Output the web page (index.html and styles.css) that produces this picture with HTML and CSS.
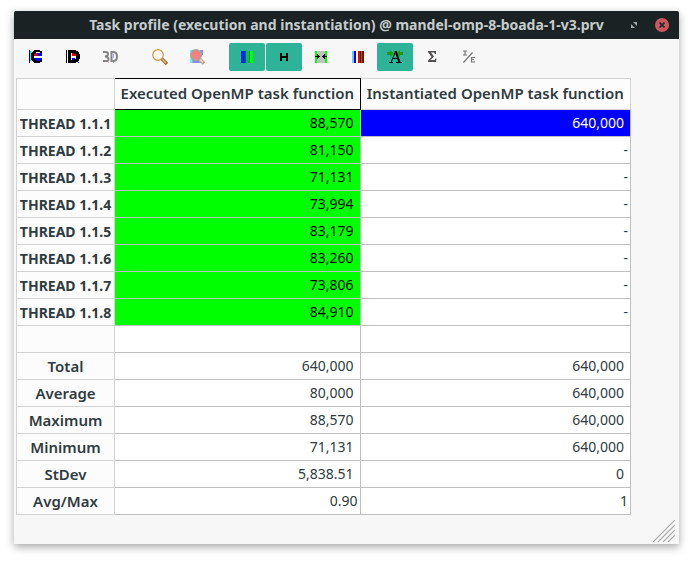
FILE: index.html
```html
<!DOCTYPE html>
<html lang="en">
<head>
<meta charset="utf-8">
<title>Task profile</title>
<link rel="stylesheet" href="styles.css">
</head>
<body>
<main class="window">
  <header class="titlebar">
    <h1 class="title">Task profile (execution and instantiation) @ mandel-omp-8-boada-1-v3.prv</h1>
    <div class="controls">
      <button class="control" aria-label="Restore"><svg width="6" height="6" viewBox="0 0 6 6"><path d="M2 0H6V4ZM0 2L4 6H0Z" fill="#a4aaaa"/></svg></button>
      <button class="control close" aria-label="Close"><svg width="6" height="6" viewBox="0 0 6 6"><path d="M.5 .5L5.500 5.500M5.500 .5L.5 5.500" stroke="#222b2e" stroke-width="1.700"/></svg></button>
    </div>
  </header>
  <div class="toolbar" role="toolbar" aria-label="Histogram tools">
    <div class="group">
      <button class="tool" aria-label="Open control window"><svg class="pixel" width="16" height="16" viewBox="0 0 16 16"><path d="M2 2H4V12H2Z" fill="#0ff"/><path d="M6 4H9V7H6Z" fill="#f00"/><path d="M9 4H14V7H9ZM6 9H14V12H6Z" fill="#00f"/><path d="M6 7H14V9H6Z" fill="#fff"/><path d="M1 1H2V14H1Z"/><path d="M6 1H12V2H14V4H12V3H8V4H7V5H6V10H7V11H8V12H12V11H14V13H12V14H6V13H5V12H4V11H3V4H4V3H5V2H6Z"/></svg></button>
      <button class="tool" aria-label="Open data window"><svg class="pixel" width="16" height="16" viewBox="0 0 16 16"><path d="M6 4H11V11H6Z" fill="#fff"/><path d="M7 4H11V7H7Z" fill="#f00"/><path d="M7 9H10V11H7ZM13 13H14V14H13Z" fill="#00f"/><path d="M1 1H2V14H1Z"/><path fill-rule="evenodd" d="M3 1H11V2H13V3H14V5H15V10H14V12H13V13H11V14H3ZM6 4V11H9V10H11V5H9V4Z"/></svg></button>
      <button class="tool" aria-label="Open 3D window"><svg width="16" height="16" viewBox="0 0 16 16"><path d="M1 3H4Q6 3 6 5T3 7.500Q6.500 7.500 6.500 10T4 12H1" fill="none" stroke="#858585" stroke-width="2"/><path d="M9.500 3H11Q15 3 15 7.500T11 12H9.500Z" fill="none" stroke="#858585" stroke-width="2"/><path d="M11 5H12V9H11Z" fill="#aaf"/><path d="M6 13H7V14H6Z" fill="#f99"/><path d="M11 13H12V14H11Z" fill="#99f"/></svg></button>
    </div>
    <div class="group">
      <button class="tool" aria-label="Zoom"><svg width="16" height="16" viewBox="0 0 16 16"><circle cx="6" cy="6" r="5.300" fill="#fbf5ec" stroke="#c9964d" stroke-width="1.200"/><path d="M10 10L15 15" stroke="#97703c" stroke-width="3.500"/><path d="M10.500 10.500L14 14" stroke="#e2bb84" stroke-width="1.500"/></svg></button>
      <button class="tool" aria-label="Zoom histogram"><svg width="16" height="16" viewBox="0 0 16 16"><path d="M1 1H3V14H1Z" fill="#7ee"/><path d="M3 1H5V14H3ZM10 9H12V14H10Z" fill="#a9a9a9"/><path d="M4 9H10V14H4ZM11 1H14V6H11Z" fill="#88f"/><circle cx="7" cy="6" r="5.200" fill="#f77f80" stroke="#aaa39b" stroke-width="1.600"/><path d="M10.500 10L15 14.500" stroke="#b49b84" stroke-width="3.500"/><path d="M11 10.500L14 13.500" stroke="#ecd6bb" stroke-width="2"/></svg></button>
    </div>
    <div class="group">
      <button class="tool active" aria-label="Color gradient"><svg width="16" height="16" viewBox="0 0 16 16"><path d="M2 2H6V14H2Z" fill="#0a28e8"/><path d="M6 2H7V14H6Z" fill="#055a8c"/><path d="M7 2H10V14H7Z" fill="#00c832"/><path d="M10 2H11V14H10Z" fill="#078034"/><path d="M11 2H14V14H11Z" fill="#0f0"/></svg></button>
      <button class="tool active" aria-label="Horizontal"><svg width="16" height="16" viewBox="0 0 16 16"><path d="M4 4H6V7H10V4H12V12H10V9H6V12H4Z"/></svg></button>
      <button class="tool" aria-label="Hide empty columns"><svg width="16" height="16" viewBox="0 0 16 16"><path d="M2 2H14V14H2Z" fill="#c0c0c0"/><path d="M2 2H4V14H2ZM12 2H14V14H12Z" fill="#0f0"/><path d="M2 7H4V5H5V6H6V7H7V8H6V9H5V10H4V8H2ZM14 7H12V5H11V6H10V7H9V8H10V9H11V10H12V8H14Z"/></svg></button>
      <button class="tool" aria-label="Semantic color"><svg width="16" height="16" viewBox="0 0 16 16"><path d="M2 2H4V14H2Z" fill="#6cf"/><path d="M4 2H6V14H4Z" fill="#00f"/><path d="M6 2H8V14H6Z" fill="#fff"/><path d="M8 2H10V14H8Z" fill="#f00"/><path d="M10 2H11V14H10Z" fill="#800"/><path d="M11 2H12V14H11Z" fill="#0a0"/><path d="M12 2H14V14H12Z" fill="#900"/></svg></button>
      <button class="tool active" aria-label="Column text"><svg width="16" height="16" viewBox="0 0 16 16"><path d="M0 3H3V1L7 4.500L3 8V6H0ZM16 3H13V1L9 4.500L13 8V6H16Z" fill="#1f9a10"/><path d="M2 13.500H6M9 13.500H15M4 13.500L8.500 2.500M6 9.500H11" fill="none" stroke="#000"/><path d="M8.500 2L12.500 13.500" stroke="#000" stroke-width="2"/></svg></button>
      <button class="tool" aria-label="Totals"><svg width="16" height="16" viewBox="0 0 16 16"><path d="M4 2H12V5H11L10 3.500H7L10 7.500L6.500 11H10.500L11.500 9.500H12.500L12 13H4V11.500L7.500 8L4 3Z" fill="#505050"/></svg></button>
      <button class="tool" aria-label="Inclusive or exclusive"><svg width="16" height="16" viewBox="0 0 16 16"><path d="M2 2H6M4 2V6M2 6H6M2.500 13.500L11.500 3.500M14 8.500H10.500V13H14M10.500 10.500H13" fill="none" stroke="#777" stroke-width="1.200"/></svg></button>
    </div>
  </div>
  <table class="histogram">
    <colgroup><col class="col-label"><col class="col-executed"><col class="col-instantiated"></colgroup>
    <thead>
      <tr><td class="corner"></td><th class="selected" scope="col">Executed OpenMP task function</th><th scope="col">Instantiated OpenMP task function</th></tr>
    </thead>
    <tbody class="threads">
      <tr><th scope="row">THREAD 1.1.1</th><td class="low">88,570</td><td class="high">640,000</td></tr>
      <tr><th scope="row">THREAD 1.1.2</th><td class="low">81,150</td><td class="none">-</td></tr>
      <tr><th scope="row">THREAD 1.1.3</th><td class="low">71,131</td><td class="none">-</td></tr>
      <tr><th scope="row">THREAD 1.1.4</th><td class="low">73,994</td><td class="none">-</td></tr>
      <tr><th scope="row">THREAD 1.1.5</th><td class="low">83,179</td><td class="none">-</td></tr>
      <tr><th scope="row">THREAD 1.1.6</th><td class="low">83,260</td><td class="none">-</td></tr>
      <tr><th scope="row">THREAD 1.1.7</th><td class="low">73,806</td><td class="none">-</td></tr>
      <tr><th scope="row">THREAD 1.1.8</th><td class="low">84,910</td><td class="none">-</td></tr>
      <tr><th></th><td></td><td></td></tr>
    </tbody>
    <tbody>
      <tr><th scope="row">Total</th><td>640,000</td><td>640,000</td></tr>
      <tr><th scope="row">Average</th><td>80,000</td><td>640,000</td></tr>
      <tr><th scope="row">Maximum</th><td>88,570</td><td>640,000</td></tr>
      <tr><th scope="row">Minimum</th><td>71,131</td><td>640,000</td></tr>
      <tr><th scope="row">StDev</th><td>5,838.51</td><td>0</td></tr>
      <tr><th scope="row">Avg/Max</th><td class="none">0.90</td><td class="none">1</td></tr>
    </tbody>
  </table>
  <svg class="grip" width="22" height="22" viewBox="0 0 22 22" aria-hidden="true"><path d="M0 22L22 0M5 22L22 5M10 22L22 10M15 22L22 15" stroke="#aaa" stroke-width="1.200"/></svg>
</main>
</body>
</html>
```
FILE: styles.css
```css
* {
  box-sizing: border-box;
}

body {
  margin: 0;
  min-height: 100vh;
  padding: 11px 14px 17px;
  display: flex;
  background: #fff;
  color: #2f3b40;
  font: 14px/20px "Noto Sans", sans-serif;
}

.window {
  flex: 1;
  display: flex;
  flex-direction: column;
  background: #f7f7f7;
  border-radius: 2px 2px 0 0;
  box-shadow: 0 3px 9px rgba(0, 0, 0, 0.35);
}

.titlebar {
  display: grid;
  grid-template-columns: 56px 1fr 56px;
  align-items: center;
  height: 28px;
  background: #1b2224;
  border-radius: 2px 2px 0 0;
}

.title {
  grid-column: 2;
  margin: 0;
  color: #c4cccc;
  font-size: 14px;
  font-weight: 700;
  text-align: center;
  white-space: nowrap;
}

.controls {
  display: flex;
  align-items: center;
  justify-content: flex-end;
  gap: 14px;
  padding-right: 10px;
}

.control {
  display: grid;
  place-items: center;
  width: 14px;
  height: 14px;
  padding: 0;
  border: 0;
  border-radius: 50%;
  background: none;
}

.close {
  background: #cc575d;
}

.toolbar {
  display: flex;
  gap: 14px;
  padding: 4px 4px 7px;
}

.group {
  display: flex;
  gap: 1px;
}

.tool {
  display: grid;
  place-items: center;
  width: 36px;
  height: 28px;
  padding: 0;
  border: 0;
  border-radius: 2px;
  background: none;
}

.pixel {
  shape-rendering: crispEdges;
}

.active {
  background: #2eb398;
}

.histogram {
  width: calc(100% - 50px);
  margin-left: 2px;
  table-layout: fixed;
  border-collapse: separate;
  border-spacing: 0;
  border-top: 1px solid #d3d3d3;
  border-left: 1px solid #d3d3d3;
}

.col-label {
  width: 98px;
}

.col-executed {
  width: 40%;
}

.histogram th,
.histogram td {
  height: 27px;
  padding: 0 6px 1px;
  border-right: 1px solid #c0c0c0;
  border-bottom: 1px solid #c0c0c0;
  background: #fff;
  text-align: right;
  white-space: nowrap;
}

.histogram th,
.histogram .corner {
  padding: 0;
  border-color: #d3d3d3;
  background: #fcfcfc;
  font-size: 15px;
  font-weight: 600;
  text-align: center;
}

.histogram .threads th {
  padding-top: 2px;
  font-size: 14px;
  font-weight: 700;
}

.histogram thead th,
.histogram .corner {
  height: 31px;
  padding-bottom: 2px;
}

.histogram thead .selected {
  border-color: #000;
  box-shadow: 0 -1px #000;
}

.histogram .low {
  background: #0f0;
  color: #000;
}

.histogram .high {
  background: #00f;
  color: #fff;
}

.histogram .none {
  padding-right: 2px;
}

.grip {
  align-self: flex-end;
  margin: auto 4px 2px 0;
}
```
